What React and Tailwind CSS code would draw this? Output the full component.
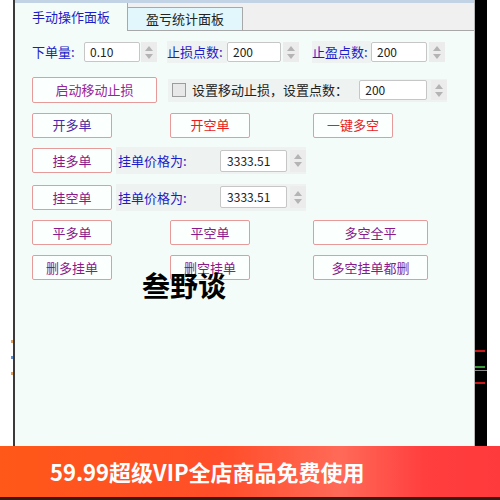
import React from "react";

const FONT = { fontFamily: '"Noto Sans CJK SC", "Noto Sans", sans-serif' };

const Spinner = ({ h = "h-[20px]" }) => (
  <div className={`w-[16px] ${h} bg-[#ececec] flex flex-col items-center justify-center gap-[3px]`}>
    <div className="w-0 h-0 border-l-[4px] border-r-[4px] border-b-[5px] border-l-transparent border-r-transparent border-b-[#b4b4b4]" />
    <div className="w-0 h-0 border-l-[4px] border-r-[4px] border-t-[5px] border-l-transparent border-r-transparent border-t-[#b4b4b4]" />
  </div>
);

const Box = ({ value, w }) => (
  <div
    className={`${w} h-[20px] bg-white border border-[#c6c6c6] rounded-[2px] pl-[5px] flex items-center text-[12px] text-[#222]`}
  >
    {value}
  </div>
);

const Btn = ({ children, w = "w-[80px]", color = "text-[#8a1a8a]", h = "h-[25px]" }) => (
  <div
    className={`${w} ${h} shrink-0 border border-[#e79a9a] rounded-[2px] bg-[#fbfffd] flex items-center justify-center text-[13px] ${color}`}
  >
    {children}
  </div>
);

const PriceRow = ({ label }) => (
  <div className="flex items-center">
    <Btn w="w-[80px]">{label}</Btn>
    <div className="ml-[4px] h-[27px] w-[190px] bg-[#eef2f0] flex items-center">
      <span className="ml-[2px] w-[104px] text-[13px] text-[#1c1cc8]">挂单价格为:</span>
      <div className="w-[68px] h-[22px] bg-white border border-[#c6c6c6] rounded-[2px] pl-[6px] flex items-center text-[12px] text-[#222]">
        3333.51
      </div>
      <div className="ml-[3px]">
        <Spinner h="h-[22px]" />
      </div>
    </div>
  </div>
);

export default function App() {
  return (
    <div className="w-[500px] h-[500px] flex flex-col overflow-hidden bg-white" style={FONT}>
      <div className="flex h-[446px]">
        <div className="w-[13px] bg-white relative">
          <div className="absolute left-[11px] top-[340px] w-[2px] h-[3px] bg-[#e0a060]" />
          <div className="absolute left-[11px] top-[356px] w-[2px] h-[3px] bg-[#6090d0]" />
          <div className="absolute left-[11px] top-[372px] w-[2px] h-[3px] bg-[#e0a060]" />
        </div>
        <div className="w-[2px] bg-[#3a3a3a]" />

        <div className="w-[459px] flex flex-col bg-[#f3fcf8] relative">
          <div className="h-[3px] bg-[#c3d3e6]" />
          <div className="h-[28px] bg-[#f0f0f0] flex items-end border-b border-[#a8a8a8] relative">
            <div className="w-[113px] h-[28px] bg-[#f3fcf8] border-r border-[#a8a8a8] flex items-center justify-center text-[13px] text-[#1c1cc8] -mb-px">
              手动操作面板
            </div>
            <div className="w-[115px] h-[23px] bg-[#e1f7fb] border-t border-r border-[#a8a8a8] flex items-center justify-center text-[13px] text-[#222]">
              盈亏统计面板
            </div>
          </div>

          <div className="pl-[17px] pt-[11px] flex flex-col">
            <div className="flex items-center h-[20px] text-[13px] text-[#1c1cc8]">
              <span className="w-[52px]">下单量:</span>
              <Box value="0.10" w="w-[56px]" />
              <div className="ml-[1px]"><Spinner /></div>
              <span className="ml-[10px] w-[60px] h-[22px] bg-[#eef2f0] flex items-center">止损点数:</span>
              <Box value="200" w="w-[54px]" />
              <div className="ml-[2px]"><Spinner /></div>
              <span className="ml-[13px] w-[59px] h-[22px] bg-[#eef2f0] flex items-center">止盈点数:</span>
              <Box value="200" w="w-[56px]" />
              <div className="ml-[2px]"><Spinner /></div>
            </div>

            <div className="mt-[15px] flex flex-col gap-[9.6px]">
              <div className="flex items-center">
                <Btn w="w-[125px]" h="h-[26px]" color="text-[#9a249a]">启动移动止损</Btn>
                <div className="ml-[11px] w-[279px] h-[23px] bg-[#eef2f0] flex items-center">
                  <div className="ml-[4px] w-[14px] h-[14px] border border-[#9c9c9c] bg-[#e8e8e8]" />
                  <span className="ml-[6px] w-[168px] text-[13px] text-[#222]">设置移动止损，设置点数：</span>
                  <Box value="200" w="w-[68px]" />
                  <div className="ml-[4px]"><Spinner /></div>
                </div>
              </div>

              <div className="flex items-center">
                <Btn color="text-[#4a2aa8]">开多单</Btn>
                <div className="ml-[58px]"><Btn color="text-[#e61e1e]">开空单</Btn></div>
                <div className="ml-[63px]"><Btn color="text-[#e61e1e]">一键多空</Btn></div>
              </div>

              <PriceRow label="挂多单" />
              <PriceRow label="挂空单" />

              <div className="flex items-center">
                <Btn>平多单</Btn>
                <div className="ml-[58px]"><Btn>平空单</Btn></div>
                <div className="ml-[63px]"><Btn w="w-[115px]">多空全平</Btn></div>
              </div>

              <div className="flex items-center">
                <Btn>删多挂单</Btn>
                <div className="ml-[58px]"><Btn>删空挂单</Btn></div>
                <div className="ml-[63px]"><Btn w="w-[115px]">多空挂单都删</Btn></div>
              </div>
            </div>
          </div>

          <div className="absolute left-[127px] top-[271px] text-[28px] font-bold leading-none text-black">
            叁野谈
          </div>
        </div>

        <div className="w-[1px] bg-[#b8b8b8]" />
        <div className="w-[12px] bg-black relative">
          <div className="absolute left-0 top-[350px] w-[10px] h-[2px] bg-[#c81818]" />
          <div className="absolute left-0 top-[366px] w-[10px] h-[2px] bg-[#3a9a3a]" />
          <div className="absolute left-0 top-[370px] w-[12px] h-[1px] bg-[#8a8a8a]" />
          <div className="absolute left-0 top-[382px] w-[10px] h-[2px] bg-[#c81818]" />
        </div>
        <div className="w-[13px] bg-white" />
      </div>

      <div className="h-[51px] bg-[linear-gradient(90deg,#ff5818_0%,#ff4e2a_45%,#ff6a58_68%,#ff3e3e_85%,#ff3a3c_100%)] flex items-center pl-[50px]">
        <span className="text-[22px] font-bold text-white">59.99超级VIP全店商品免费使用</span>
      </div>
      <div className="h-[3px] bg-[#3a1a12]" />
    </div>
  );
}
